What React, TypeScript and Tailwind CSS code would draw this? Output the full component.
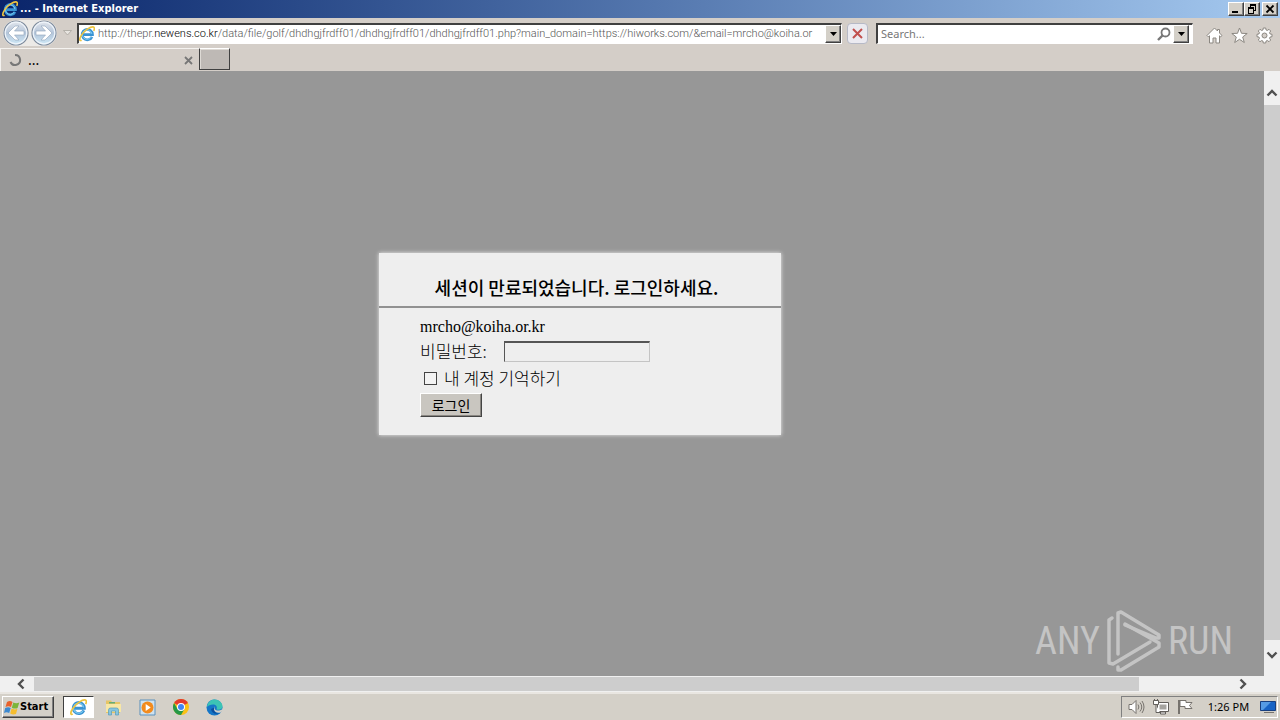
import type { ReactNode } from "react";

const raised =
  "border border-t-white border-l-white border-r-[#404040] border-b-[#404040] bg-[#d4d0c8] shadow-[inset_-1px_-1px_0_#808080]";

function IeIcon({ className }: { className: string }) {
  return (
    <svg viewBox="0 0 16 16" className={className} aria-hidden="true">
      <path d="M13 10.800A5.200 5.200 0 1 1 13.500 8.700H4.500" fill="none" stroke="#3a93d2" strokeWidth="2.700" />
      <path d="M12.300 11A4.800 4.800 0 1 1 12.900 8" fill="none" stroke="#7ccbf2" strokeWidth="1" />
      <path d="M2.600 14.2C.2 15.600.1 12.400 2.800 8.600 6 4 11.500 0.600 14 0.900c1.800 0.200 1.600 2.200 0.700 4" fill="none" stroke="#edc440" strokeWidth="1.600" />
    </svg>
  );
}

function NavArrow({ label, flip }: { label: string; flip?: boolean }) {
  return (
    <button aria-label={label} className="size-[26px]">
      <svg viewBox="0 0 26 26" className={flip ? "size-[26px] -scale-x-100" : "size-[26px]"}>
        <defs>
          <linearGradient id={flip ? "navf" : "navb"} x1="0" y1="0" x2="0" y2="1">
            <stop offset="0" stopColor="#e3e6ec" />
            <stop offset="0.5" stopColor="#b4c5da" />
            <stop offset="1" stopColor="#cfeaf8" />
          </linearGradient>
        </defs>
        <circle cx="13" cy="13" r="12" fill={flip ? "url(#navf)" : "url(#navb)"} stroke="#7f8c9d" strokeWidth="1.2" />
        <circle cx="13" cy="13" r="10.800" fill="none" stroke="#eef4fa" strokeWidth="1.200" />
        <path d="M5 13l7-7h4L11.500 11H21v4h-9.500L16 20h-4z" fill="#fff" stroke="#8fa3ba" strokeWidth="0.6" />
      </svg>
    </button>
  );
}

function DropArrow({ label }: { label: string }) {
  return (
    <button aria-label={label} className={`flex h-[18px] w-4 shrink-0 items-center justify-center ${raised}`}>
      <svg viewBox="0 0 7 4" className="h-1 w-[7px]">
        <path d="M0 0h7L3.500 4z" fill="#000" />
      </svg>
    </button>
  );
}

function WindowButton({ label, children }: { label: string; children: ReactNode }) {
  return (
    <button aria-label={label} className={`flex h-[14px] w-4 items-center justify-center ${raised}`}>
      <svg viewBox="0 0 12 10" className="h-[10px] w-3" fill="none" stroke="#000" shapeRendering="crispEdges">
        {children}
      </svg>
    </button>
  );
}

function Chevron({ d, label, className }: { d: string; label: string; className: string }) {
  return (
    <button aria-label={label} className={`flex shrink-0 items-center justify-center ${className}`}>
      <svg viewBox="0 0 12 12" className="size-3" fill="none" stroke="#505050" strokeWidth="2.400">
        <path d={d} />
      </svg>
    </button>
  );
}

function TitleBar() {
  return (
    <header className="flex h-[18px] shrink-0 items-center bg-linear-to-r from-[#0a246a] to-[#a6caf0] pr-0.5 pl-0.5">
      <IeIcon className="size-4" />
      <h1 className="grow pl-0.5 font-['DejaVu_Sans_Condensed','DejaVu_Sans',sans-serif] text-[11px] leading-4 font-bold whitespace-nowrap text-white">
        ... - Internet Explorer
      </h1>
      <WindowButton label="Minimize">
        <path d="M2 8h6" strokeWidth="2" />
      </WindowButton>
      <WindowButton label="Restore">
        <path d="M4 1h6M2 4h6" strokeWidth="2" />
        <path d="M4.500 1v3M9.500 1v5.500H8M2.500 4v5.500h5V4" />
      </WindowButton>
      <span className="w-0.5" />
      <WindowButton label="Close">
        <path d="M2.500 1.500l7 7M9.500 1.500l-7 7" strokeWidth="1.800" shapeRendering="auto" />
      </WindowButton>
    </header>
  );
}

function AddressBar() {
  return (
    <div className="flex h-[30px] shrink-0 items-center pl-[3px]">
      <div className="flex items-center gap-0.5 rounded-full bg-[#eceae7]">
        <NavArrow label="Back" />
        <NavArrow label="Forward" flip />
      </div>
      <button aria-label="Recent pages" className="flex w-5 justify-center">
        <svg viewBox="0 0 9 6" className="h-1.5 w-[9px]">
          <path d="M.5.5h8l-4 4.500z" fill="#e8e5e0" stroke="#aaa6a0" strokeWidth="0.8" />
        </svg>
      </button>
      <div className="flex h-[21px] min-w-0 grow items-center border-t-2 border-r border-b border-l-2 border-t-[#404040] border-r-white border-b-white border-l-[#404040] bg-white">
        <IeIcon className="size-4 shrink-0" />
        <p className="min-w-0 grow overflow-hidden pl-[3px] font-['Roboto',sans-serif] text-[11px] leading-4 font-light whitespace-nowrap text-[#555]">
          http://thepr.<span className="text-black">newens.co.kr</span>
          /data/file/golf/dhdhgjfrdff01/dhdhgjfrdff01/dhdhgjfrdff01.php?main_domain=https://hiworks.com/&amp;email=mrcho@koiha.or
        </p>
        <DropArrow label="Show address list" />
      </div>
      <button
        aria-label="Stop"
        className="mr-2 ml-[5px] flex h-[21px] w-[21px] shrink-0 items-center justify-center rounded-sm border border-[#b6b9c6] bg-[#ebeaf0]"
      >
        <svg viewBox="0 0 11 11" className="size-[11px]">
          <path d="M1 1l9 9M10 1l-9 9" stroke="#c1504e" strokeWidth="2" />
        </svg>
      </button>
      <div className="flex h-[21px] w-[317px] shrink-0 items-center border-t-2 border-r border-b border-l-2 border-t-[#404040] border-r-white border-b-white border-l-[#404040] bg-white pr-[3px] pl-[3px]">
        <input
          aria-label="Search"
          placeholder="Search..."
          className="min-w-0 grow bg-transparent text-[11px] leading-4 outline-none placeholder:text-[#777]"
        />
        <button aria-label="Search the web" className="mr-0.5">
          <svg viewBox="0 0 14 14" className="size-[14px]" fill="none" stroke="#777">
            <circle cx="8.500" cy="5.500" r="4" strokeWidth="1.800" />
            <path d="M5.500 8.500L1 13" strokeWidth="2.400" />
          </svg>
        </button>
        <DropArrow label="Search options" />
      </div>
      <div className="flex w-[87px] shrink-0 items-center justify-between pt-1 pr-[7px] pl-[13px]">
        <button aria-label="Home">
          <svg viewBox="0 0 17 17" className="size-[17px]" fill="#fff" stroke="#8b8781">
            <path d="M8.500 1L1 8.500l1.300 1.300 1.200-1V16h3.500v-5h3v5h3.500V8.800l1.200 1L16 8.500l-2.500-2.500V2.500h-2V4z" />
          </svg>
        </button>
        <button aria-label="Favorites">
          <svg viewBox="0 0 17 17" className="size-[17px]" fill="#fff" stroke="#8b8781">
            <path d="M8.500 1l2 5.300 5.700.2-4.500 3.500 1.600 5.500-4.800-3.200-4.800 3.200L5.300 10 .8 6.500l5.700-.2z" />
          </svg>
        </button>
        <button aria-label="Tools">
          <svg viewBox="0 0 17 17" className="size-[17px]" stroke="#8b8781" strokeLinejoin="round">
            <path
              d="M7.300 1h2.400l.4 2 1.200.5 1.700-1.200 1.700 1.700-1.200 1.700.5 1.200 2 .4v2.400l-2 .4-.5 1.200 1.200 1.700-1.700 1.700-1.700-1.200-1.200.5-.4 2H7.300l-.4-2-1.200-.5L4 14.700 2.300 13l1.200-1.700-.5-1.200-2-.4V7.300l2-.4.5-1.200L2.300 4 4 2.300l1.700 1.200L6.900 3z"
              fill="#fff"
            />
            <circle cx="8.500" cy="8.500" r="2.500" fill="#d4cec8" />
          </svg>
        </button>
      </div>
    </div>
  );
}

function TabRow() {
  return (
    <div className="flex h-[23px] shrink-0">
      <div className="flex w-[199px] items-center border-t border-l border-[#f5f3f0] pr-[6px] pl-[7px]">
        <svg viewBox="0 0 14 14" className="size-[14px]" fill="none" stroke="#777" strokeWidth="2">
          <path d="M7 2a5 5 0 1 1-4.500 7" />
        </svg>
        <span className="grow pl-[6px] text-sm leading-4">...</span>
        <button aria-label="Close tab">
          <svg viewBox="0 0 9 9" className="size-[9px]" stroke="#777" strokeWidth="1.800">
            <path d="M1 1l7 7M8 1l-7 7" />
          </svg>
        </button>
      </div>
      <button
        aria-label="New tab"
        className="h-[22px] w-[31px] border border-t-white border-r-[#404040] border-b-[#404040] border-l-[#404040] bg-[#beb9b5] shadow-[inset_1px_1px_0_#dedad5]"
      />
    </div>
  );
}

function LoginCard() {
  return (
    <form
      onSubmit={(event) => event.preventDefault()}
      className="w-[402px] bg-[#eee] pt-[21px] pb-[18px] font-['Liberation_Serif','Noto_Sans_CJK_KR',serif] text-black shadow-[0_0_4px_#eee]"
    >
      <h2 className="border-b-2 border-[#919191] pr-[7px] pb-[6px] text-center font-['Noto_Sans_CJK_KR',sans-serif] text-lg leading-[26px] font-medium">
        세션이 만료되었습니다. 로그인하세요.
      </h2>
      <div className="flex flex-col items-start pt-2 pl-[41px]">
        <p className="text-base leading-[22px]">mrcho@koiha.or.kr</p>
        <div className="flex h-[26px] items-center">
          <label htmlFor="password" className="w-[84px] font-['Noto_Sans_CJK_KR',sans-serif] text-[17px] leading-6 font-light">
            비밀번호:
          </label>
          <input
            id="password"
            type="password"
            className="h-[21px] w-[146px] border border-t-2 border-t-[#555] border-r-[#c4c4c4] border-b-[#c4c4c4] border-l-[#555] bg-[#eee] px-1 outline-none"
          />
        </div>
        <label className="flex h-[28px] items-center gap-[7px] pl-[4px] font-['Noto_Sans_CJK_KR',sans-serif] text-[17px] leading-6 font-light">
          <input type="checkbox" className="size-[13px] appearance-none border border-[#444] bg-[#f3f3f3]" />
          내 계정 기억하기
        </label>
        <button className="mt-px h-6 w-[62px] border border-t-white border-r-[#444] border-b-[#444] border-l-white bg-[#c9c6c0] font-['Noto_Sans_CJK_KR',sans-serif] text-sm leading-5 shadow-[inset_-1px_-1px_0_#8a8782]">
          로그인
        </button>
      </div>
    </form>
  );
}

function Watermark() {
  return (
    <div className="absolute right-[31px] bottom-1 flex items-center gap-1.5 font-['Roboto_Condensed','Liberation_Sans_Narrow','Roboto',sans-serif] text-[38px] leading-[62px] font-normal text-[#c4c4c4]">
      <span>ANY</span>
      <svg viewBox="0 0 56 62" className="h-[62px] w-14" fill="none" stroke="#c4c4c4" strokeWidth="3.500" strokeLinejoin="round" strokeLinecap="round">
        <path d="M6 8L3 10V53L7 54L44 32" />
        <path d="M12 44V3L15 2L53 25V28L50 28L19 15" />
        <path d="M12 57V60L15 60L53 37V33L19 14" />
      </svg>
      <span>RUN</span>
    </div>
  );
}

function Browser() {
  return (
    <main className="flex min-h-0 grow flex-col">
      <div className="flex min-h-0 grow">
        <div className="relative flex min-w-0 grow items-center justify-center bg-[#979797] pr-[104px] pb-[59px]">
          <LoginCard />
          <Watermark />
        </div>
        <div className="flex w-4 shrink-0 flex-col bg-[#f0f0f0]">
          <Chevron label="Scroll up" d="M1.500 8.500L6 4l4.500 4.500" className="h-[34px] pt-2.5" />
          <div className="grow bg-[#cdcdcd]" />
          <Chevron label="Scroll down" d="M1.500 3.500L6 8l4.500-4.500" className="h-[36px] pb-1.5" />
        </div>
      </div>
      <div className="flex h-4 shrink-0 bg-[#f0f0f0] pr-4">
        <Chevron label="Scroll left" d="M8.500 1.500L4 6l4.500 4.500" className="w-[34px] pl-2" />
        <div className="my-px grow bg-[#cdcdcd]" />
        <Chevron label="Scroll right" d="M3.500 1.500L8 6l-4.500 4.500" className="w-[125px] pl-[83px]" />
      </div>
    </main>
  );
}

function Taskbar() {
  return (
    <footer className="flex h-7 shrink-0 items-center border-t-2 border-[#e9e6e1] bg-[#d4d0c8] pr-0.5 pl-0.5">
      <button className={`flex h-[22px] w-[52px] items-center pl-px font-['DejaVu_Sans_Condensed','DejaVu_Sans',sans-serif] text-[11px] leading-4 font-bold ${raised}`}>
        <svg viewBox="0 0 16 15" className="h-[15px] w-4 shrink-0">
          <path d="M3 2q3-2 5.500 0L7 7Q4.500 5.500 1.500 7z" fill="#e8622c" />
          <path d="M9.300 2.500q3 1.500 6 0L13.600 8q-2.500 1.300-5.800-.3z" fill="#7cb53a" />
          <path d="M1.200 8q3-1.500 5.500 0L5.200 13Q2.500 11.500 0 13z" fill="#3c89d0" />
          <path d="M7.600 8.600q3 1.500 5.800.2L12 14q-3 1-5.800-.5z" fill="#f5bd2e" />
        </svg>
        Start
      </button>
      <nav aria-label="Running programs" className="flex grow items-center pl-[9px]">
        <button aria-label="Internet Explorer" className="flex h-[22px] w-[31px] items-center justify-center border border-t-[#404040] border-r-white border-b-white border-l-[#404040] bg-white">
          <IeIcon className="size-[17px]" />
        </button>
        <button aria-label="File Explorer" className="ml-[11px] flex w-[17px] justify-center">
          <svg viewBox="0 0 17 17" className="size-[17px]">
            <path d="M1 3V1.500h5L7 3h8v11H1z" fill="#e7c565" />
            <path d="M1 5h15v8H1z" fill="#f8e7a5" />
            <path d="M4 3h6v1.500H4z" fill="#65ad77" />
            <path d="M3.500 16v-5q0-2 2-2h6q2 0 2 2v5h-3v-4h-4v4z" fill="#88c5de" stroke="#559cbb" strokeWidth="0.7" />
          </svg>
        </button>
        <button aria-label="Media Player" className="ml-[17px]">
          <svg viewBox="0 0 17 17" className="size-[17px]">
            <path d="M1 1h15v15H1z" fill="#cfe2ef" stroke="#5a91bd" />
            <circle cx="8.500" cy="8.500" r="6" fill="#f28b1d" />
            <path d="M6.700 5l5 3.500-5 3.500z" fill="#fff" />
          </svg>
        </button>
        <button aria-label="Chrome" className="ml-[17px]">
          <svg viewBox="0 0 16 16" className="size-4">
            <circle cx="8" cy="8" r="8" fill="#fbc116" />
            <path d="M8 8L1.070 4A8 8 0 0 1 14.930 4z" fill="#e33b2e" />
            <path d="M1.070 4A8 8 0 0 0 8 16l3.500-6L8 8 4.500 10z" fill="#269847" />
            <circle cx="8" cy="8" r="4" fill="#fff" />
            <circle cx="8" cy="8" r="3" fill="#4285f4" />
          </svg>
        </button>
        <button aria-label="Edge" className="ml-[17px]">
          <svg viewBox="0 0 17 17" className="size-[17px]">
            <circle cx="8.500" cy="8.500" r="8" fill="#1576c7" />
            <path d="M1 8C1.500 3 5 .5 8.500.5c4.500 0 8 3.500 8 6.800 0 3.200-3 4.200-6 3.200 1.300-3.500-1-5-3.500-5S2 6.500 1 8z" fill="#3cc4b5" />
            <path d="M5 10c.5 4 4.500 6 8.500 4-4 .5-6.500-2-5-5.500" fill="#0c4f9e" />
            <path d="M9 7.500c-1.500 2 .5 4.500 4 4 1.500-.2 2.500-.8 3.500-1.500V12l-2 1.500c-3 1-6.500-.5-6.500-3.500 0-1.500.5-2.200 1-2.500z" fill="#d4d0c8" />
          </svg>
        </button>
      </nav>
      <div className="flex h-[22px] w-[157px] items-center border border-t-[#808080] border-r-white border-b-white border-l-[#808080] pr-px pl-[6px]">
        <svg viewBox="0 0 17 16" className="mr-2 h-4 w-[17px]" fill="#fff" stroke="#77736e">
          <path d="M1 5.500h3L8 1.500v13L4 10.500H1z" />
          <path d="M10 5.500q1.800 2.500 0 5M12 3.500q3.500 4.500 0 9M14 2q4 6 0 12" fill="none" />
        </svg>
        <svg viewBox="0 0 16 16" className="mr-2 size-4" fill="#fff" stroke="#625f5b">
          <path d="M4.500 3.500h11v9h-11z" />
          <path d="M6.500 5.500h7v5h-7z" fill="#a5a39f" stroke="none" />
          <path d="M7.500 13h5v2h-5z" />
          <path d="M.5 1.500h5v4h-5zM1.500 0v2M4.500 0v2M3 6v7.500h4" />
        </svg>
        <svg viewBox="0 0 16 16" className="size-4" fill="#fff" stroke="#77736e">
          <path d="M2 15V1" strokeWidth="2" />
          <path d="M3 1.500h6v2h6l-2.500 3L15 9.500H8v-2H3z" />
        </svg>
        <time className="grow pl-1 text-center text-[11px] leading-4 whitespace-nowrap text-black">1:26 PM</time>
        <svg viewBox="0 0 16 14" className="h-[14px] w-4">
          <path d="M.5 1.500h15v9H.5z" fill="#1763c5" stroke="#173f80" />
          <path d="M1 2h10L3 10H1z" fill="#559be5" />
          <path d="M4 12.500h10" stroke="#77736e" />
        </svg>
      </div>
    </footer>
  );
}

export default function App() {
  return (
    <div className="flex h-screen flex-col overflow-hidden bg-[#d4cec8] font-['Noto_Sans',sans-serif] text-black">
      <TitleBar />
      <AddressBar />
      <TabRow />
      <Browser />
      <Taskbar />
    </div>
  );
}
